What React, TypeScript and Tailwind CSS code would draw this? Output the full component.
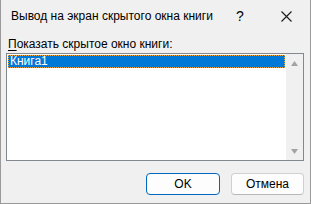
import React from 'react';

const font = { fontFamily: '"Liberation Sans", Arial, sans-serif' };

export default function App() {
  return (
    <div
      className="w-[311px] h-[204px] bg-[#f0f0f0] border-x border-b border-[#9a9a9a] flex flex-col text-[12px] text-black"
      style={font}
    >
      {/* Title bar */}
      <div className="h-[32px] flex items-center pl-[10px] shrink-0">
        <span className="flex-1 leading-none whitespace-nowrap">Вывод на экран скрытого окна книги</span>
        <span className="w-[46px] text-center text-[14px] leading-none">?</span>
        <div className="w-[46px] h-[32px] flex items-center justify-center mr-[1px]">
          <svg width="11" height="11" viewBox="0 0 11 11">
            <path d="M0.5 0.5 L10.5 10.5 M10.5 0.5 L0.5 10.5" stroke="#1a1a1a" strokeWidth="1.1" />
          </svg>
        </div>
      </div>

      {/* Label */}
      <div className="mt-[4px] h-[16px] leading-[16px] pl-[7px] whitespace-nowrap">
        <span className="underline underline-offset-2">П</span>оказать скрытое окно книги:
      </div>

      {/* List box */}
      <div className="mt-[1px] ml-[5px] w-[298px] h-[108px] border border-[#828790] bg-white flex">
        <div className="flex-1 pt-[1px] pl-[1px] pr-[1px]">
          <div className="h-[13px] bg-[#0078d7] text-white leading-[13px] pl-[2px] outline-1 outline-dotted outline-[#e8a33c] -outline-offset-1">
            Книга1
          </div>
        </div>
        <div className="w-[17px] bg-[#f0f0f0] flex flex-col items-center justify-between pt-[7px] pb-[6px]">
          <svg width="7" height="5" viewBox="0 0 7 5">
            <path d="M0 5 L3.5 0 L7 5 Z" fill="#a3a3a3" />
          </svg>
          <svg width="7" height="5" viewBox="0 0 7 5">
            <path d="M0 0 L3.5 5 L7 0 Z" fill="#a3a3a3" />
          </svg>
        </div>
      </div>

      {/* Buttons */}
      <div className="mt-[12px] flex justify-end pr-[6px] gap-[11px]">
        <button className="w-[74px] h-[22px] rounded-[4px] border border-[#0067c0] bg-[#fdfdfd] leading-none">
          OK
        </button>
        <button className="w-[73px] h-[22px] rounded-[4px] border border-[#d0d0d0] border-b-[#b8b8b8] bg-[#fdfdfd] leading-none">
          Отмена
        </button>
      </div>
    </div>
  );
}
